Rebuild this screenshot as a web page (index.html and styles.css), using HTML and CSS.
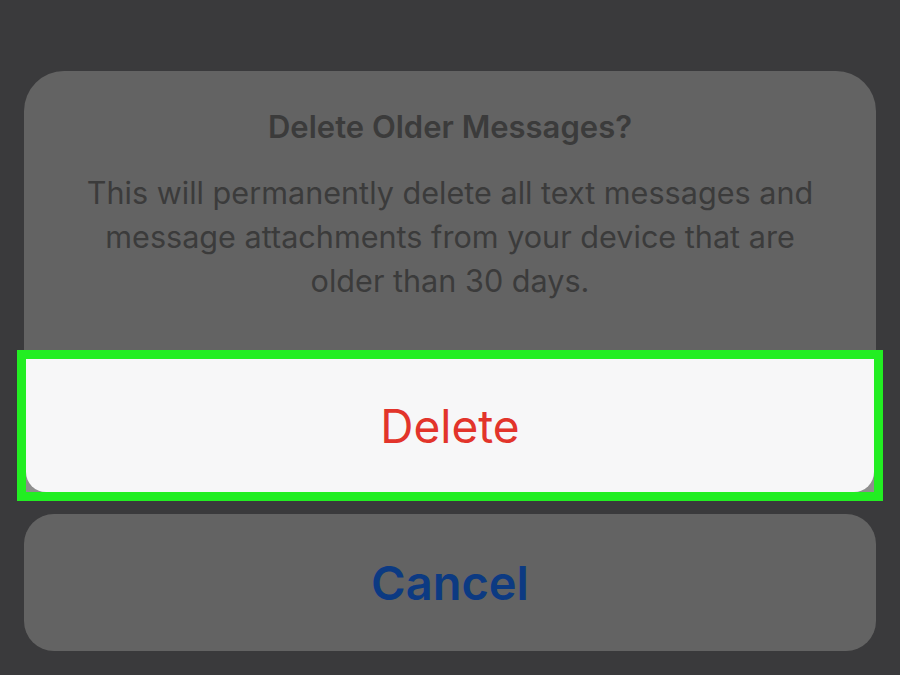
FILE: index.html
```html
<!DOCTYPE html>
<html lang="en">
<head>
	<meta charset="UTF-8">
	<meta name="viewport" content="width=device-width, initial-scale=1.0">
	<title>Delete Older Messages</title>
	<link rel="stylesheet" href="styles.css">
</head>
<body>
	<div class="sheet">
		<section class="alert">
			<div class="alert-body">
				<h1 class="alert-title">Delete Older Messages?</h1>
				<p class="alert-text">This will permanently delete all text messages and message attachments from your device that are older than 30 days.</p>
			</div>
			<div class="action-frame">
				<button class="btn btn-delete">Delete</button>
			</div>
		</section>
		<button class="btn btn-cancel">Cancel</button>
	</div>
</body>
</html>
```

FILE: styles.css
```css
* {
	box-sizing: border-box;
	margin: 0;
	padding: 0;
}

body {
	width: 900px;
	height: 675px;
	overflow: hidden;
	background-color: #3a3a3c;
	font-family: Inter, "Liberation Sans", sans-serif;
}

.sheet {
	display: flex;
	flex-direction: column;
	padding: 71px 24px 0;
}

.alert {
	background-color: #636363;
	border-radius: 40px 40px 0 0;
}

.alert-body {
	height: 288px;
	padding: 40px 50px 0;
	text-align: center;
	color: #3b3b3b;
}

.alert-title {
	font-size: 31px;
	font-weight: 600;
	line-height: 32px;
}

.alert-text {
	margin-top: 28px;
	font-size: 30.6px;
	font-weight: 400;
	line-height: 44px;
}

.action-frame {
	margin: 0 2px;
	background-color: #8e8e8e;
	outline: 9px solid #22ee22;
}

.btn {
	display: block;
	width: 100%;
	border: none;
	font-family: Inter, "Liberation Sans", sans-serif;
	font-size: 46px;
	cursor: pointer;
}

.btn-delete {
	height: 133px;
	background-color: #f7f7f8;
	color: #e2342b;
	font-weight: 400;
	border-radius: 0 0 20px 20px;
}

.btn-cancel {
	height: 137px;
	margin-top: 22px;
	background-color: #636363;
	color: #0c3a82;
	font-weight: 600;
	font-size: 47px;
	border-radius: 30px;
}
```
